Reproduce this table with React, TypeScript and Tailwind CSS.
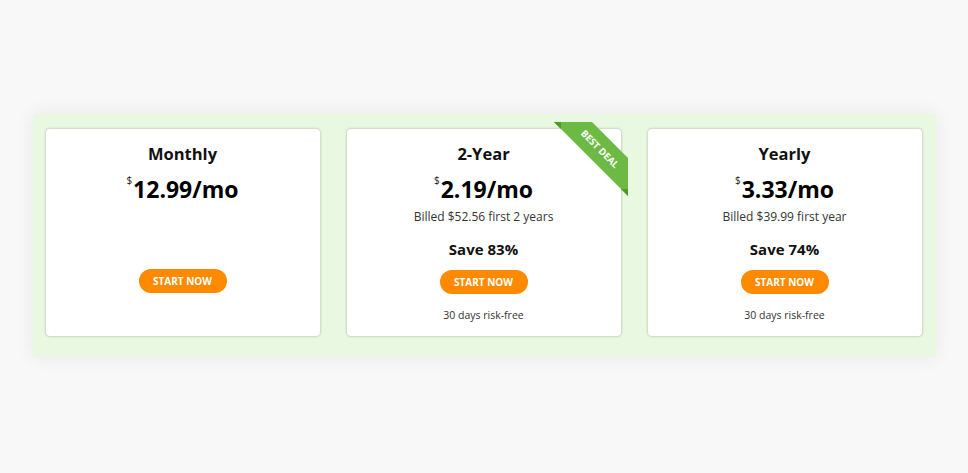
const plans = [
    { name: 'Monthly', price: '12.99', billed: '', save: '', note: '', best: false },
    { name: '2-Year', price: '2.19', billed: 'Billed $52.56 first 2 years', save: 'Save 83%', note: '30 days risk-free', best: true },
    { name: 'Yearly', price: '3.33', billed: 'Billed $39.99 first year', save: 'Save 74%', note: '30 days risk-free', best: false },
];

function Ribbon() {
    return (
        <svg className="absolute -top-[7px] -right-[7px]" width="74" height="74" viewBox="0 0 74 74">
            <polygon points="0,0 38,0 74,36 74,74" fill="#6cb944" />
            <polygon points="0,0 7,0 7,7" fill="#4f9a2c" />
            <polygon points="67,67 74,67 74,74" fill="#4f9a2c" />
            <text
                x="46"
                y="27"
                transform="rotate(45 46 27)"
                textAnchor="middle"
                dominantBaseline="central"
                fill="#ffffff"
                fontSize="9.5"
                fontWeight="700"
                fontFamily="'Open Sans', sans-serif"
            >
                BEST DEAL
            </text>
        </svg>
    );
}

export default function App() {
    return (
        <div className="min-h-[473px] w-full bg-[#f8f8f8] pt-[114px] font-['Open_Sans',sans-serif]">
            <div className="mx-auto w-[903px] bg-[#e9f8e1] px-[13px] pt-[15px] pb-[21px] shadow-[0_0_18px_rgba(0,0,0,0.07)]">
                <div className="grid grid-cols-[274px_274px_274px] gap-[27px]">
                    {plans.map(plan => (
                        <div
                            key={plan.name}
                            className="relative flex h-[207px] flex-col items-center rounded-[4px] bg-white pt-[13px] shadow-[0_0_3px_rgba(0,0,0,0.28)]"
                        >
                            {plan.best && <Ribbon />}
                            <h3 className="text-[16.5px] font-bold leading-[24px] text-[#111]">{plan.name}</h3>
                            <div className="mt-[7px] flex items-start leading-[32px] text-black">
                                <span className="mr-[1px] mt-[1px] text-[10px] leading-[12px] text-[#222]">$</span>
                                <span className="text-[23px] font-bold">{plan.price}/mo</span>
                            </div>
                            <p className="mt-[3px] h-[18px] text-[12px] leading-[18px] text-[#333]">{plan.billed}</p>
                            <p className="mt-[12px] h-[22px] text-[15px] font-bold leading-[22px] text-[#111]">{plan.save}</p>
                            <button className={`${plan.note ? 'mt-[10px]' : 'mt-[9px]'} flex h-[24px] w-[88px] items-center justify-center rounded-full bg-[#ff8a00] text-[10px] font-bold leading-none text-white`}>
                                START NOW
                            </button>
                            <p className="mt-[13px] text-[10.5px] leading-[16px] text-[#333]">{plan.note}</p>
                        </div>
                    ))}
                </div>
            </div>
        </div>
    );
}
